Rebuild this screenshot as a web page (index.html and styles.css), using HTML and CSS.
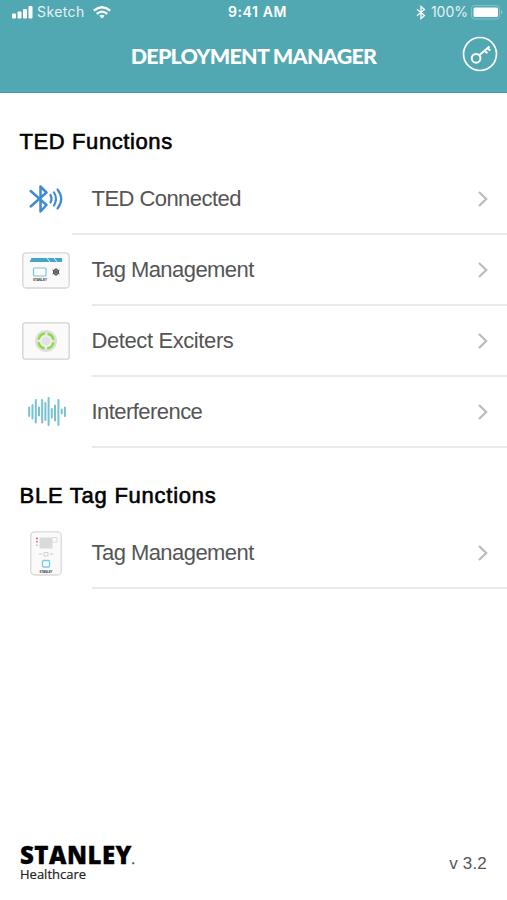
FILE: index.html
```html
<!DOCTYPE html>
<html lang="en">
<head>
<meta charset="utf-8">
<title>Deployment Manager</title>
<link rel="stylesheet" href="styles.css">
</head>
<body>
<div class="screen">
  <header class="header">
    <div class="status">
      <div class="carrier">
        <svg width="21" height="14" viewBox="0 0 21 14" fill="#fff"><rect x="0" y="8.500" width="4" height="5" rx="1"/><rect x="5.500" y="6.500" width="4" height="7" rx="1"/><rect x="11" y="4" width="4" height="9.500" rx="1"/><rect x="16.500" y="1" width="4" height="12.500" rx="1"/></svg>
        <span class="network">Sketch</span>
        <svg width="18" height="13" viewBox="0 0 18 13" fill="none" stroke="#fff" stroke-width="2.300"><path d="M.8 4.600Q9-2.200 17.200 4.600M3.700 7.800Q9 3.400 14.300 7.800"/><path d="M6.300 9.800Q9 7.700 11.700 9.800L9 12.500Z" fill="#fff" stroke="none"/></svg>
      </div>
      <span class="clock">9:41 AM</span>
      <div class="power">
        <svg width="10" height="15" viewBox="0 0 10 15" fill="none" stroke="#fff" stroke-width="1.300"><path d="M1 4.200L8.500 10.600L5 13.600V1.400L8.500 4.400L1 10.800"/></svg>
        <span class="percent">100%</span>
        <svg width="32" height="15" viewBox="0 0 32 15"><rect x=".5" y=".5" width="28" height="13.500" rx="3" fill="none" stroke="#83c1c8"/><rect x="2.500" y="2.500" width="24.500" height="9.500" rx="1.500" fill="#fff"/><path d="M30 5Q32.500 7.200 30 9.500Z" fill="#9bced3"/></svg>
      </div>
    </div>
    <div class="titlebar">
      <h1>DEPLOYMENT MANAGER</h1>
      <svg class="key" width="36" height="36" viewBox="0 0 36 36" fill="none" stroke="#fff" stroke-width="1.700"><circle cx="18" cy="18" r="16.500"/><circle cx="14.100" cy="22.300" r="4.400" stroke-width="2"/><path d="M17.200 19.200L27.500 10.500M22.500 14.500L25.300 17.300M25.400 12L28.200 14.600" stroke-width="2"/></svg>
    </div>
  </header>

  <main>
    <section>
      <h2>TED Functions</h2>
      <ul>
        <li class="row wide">
          <div class="icon"><svg width="48" height="36" viewBox="0 0 48 36" fill="none" stroke="#408bd5" stroke-width="2.500" stroke-linecap="round" stroke-linejoin="round"><path d="M8.700 10L24.500 24L18.500 30.500V5.500L24.500 11.500L8.700 25.500"/><path d="M28.500 14Q30.500 17.700 28.500 21.500M32 11.500Q36 17.700 32 24.500M35.500 8.500Q43 18 35.500 27.500" stroke-width="2.200"/></svg></div>
          <span class="label">TED Connected</span>
          <svg class="chevron" width="12" height="18" viewBox="0 0 12 18"><path d="M2 2L9.200 9L2 16"/></svg>
        </li>
        <li class="row">
          <div class="icon"><svg width="48" height="37" viewBox="0 0 48 37"><rect x=".8" y=".8" width="46.400" height="35.200" rx="3.500" fill="#fafafa" stroke="#d5d5d5" stroke-width="1.300"/><path d="M9.500 6H40V10H7.500Z" fill="#42a7c5"/><path d="M25 6L28 10M32 6L35 10" stroke="#d9f0f5" stroke-width="1"/><rect x="11.500" y="16" width="12.500" height="8" rx="1" fill="#fff" stroke="#70c7df" stroke-width="1.200"/><g stroke="#555"><circle cx="34" cy="20" r="2.400" fill="none" stroke-width="1.300"/><path d="M34 16V24M30.500 18L37.500 22M30.500 22L37.500 18" stroke-width="1"/></g><text x="11" y="29" class="brand" textLength="14" lengthAdjust="spacingAndGlyphs">STANLEY</text></svg></div>
          <span class="label">Tag Management</span>
          <svg class="chevron" width="12" height="18" viewBox="0 0 12 18"><path d="M2 2L9.200 9L2 16"/></svg>
        </li>
        <li class="row">
          <div class="icon"><svg width="48" height="38" viewBox="0 0 48 38"><rect x=".8" y=".8" width="46.400" height="36.400" rx="2.500" fill="#fafafa" stroke="#d2d2d2" stroke-width="1.300"/><circle cx="24" cy="19" r="11" fill="#dedede"/><circle cx="24" cy="19" r="7.500" fill="#eceeec" stroke="#8edb3e" stroke-width="2.500" stroke-dasharray="9 2.780" stroke-dashoffset="-1.400"/><circle cx="24" cy="19" r="4" fill="#e1e3e3"/></svg></div>
          <span class="label detect">Detect Exciters</span>
          <svg class="chevron" width="12" height="18" viewBox="0 0 12 18"><path d="M2 2L9.200 9L2 16"/></svg>
        </li>
        <li class="row">
          <div class="icon"><svg width="48" height="36" viewBox="0 0 48 36" fill="none" stroke="#78c1d5" stroke-width="2" stroke-linecap="round"><path d="M7.200 13.500V22M10.500 11V24.500M13.800 6V28.500M17 13.500V21.500M20.200 6V28.500M23.400 9V26M26.600 4V31M29.800 15V23.500M33 11.500V26.500M36.400 6V31M39.700 15.500V19.500M42.900 13.500V22"/></svg></div>
          <span class="label">Interference</span>
          <svg class="chevron" width="12" height="18" viewBox="0 0 12 18"><path d="M2 2L9.200 9L2 16"/></svg>
        </li>
      </ul>
    </section>
    <section>
      <h2 class="ble">BLE Tag Functions</h2>
      <ul>
        <li class="row">
          <div class="icon"><svg width="32" height="45" viewBox="0 0 32 45"><rect x=".8" y=".8" width="30.400" height="43.200" rx="4" fill="#fafafa" stroke="#d9d9d9" stroke-width="1.300"/><rect x="9.500" y="6.500" width="13" height="11" fill="#dadada"/><path d="M22.500 6.500H27V11H22.500" fill="none" stroke="#ddd"/><path d="M7 6.500V8.500M7 10V11.500" stroke="#d5555e" stroke-width="1.500"/><path d="M7 13.500V15" stroke="#bbb" stroke-width="1.500"/><path d="M9 23H12M20 23H23" stroke="#ccc"/><path d="M14 21.500V25H18V21.500Z" fill="none" stroke="#d0d0d0"/><rect x="12.500" y="29.500" width="7" height="6.500" rx="1" fill="#f7fdff" stroke="#7bcce2" stroke-width="1.300"/><text x="9.500" y="41.500" class="brand" textLength="13" lengthAdjust="spacingAndGlyphs">STANLEY</text></svg></div>
          <span class="label">Tag Management</span>
          <svg class="chevron" width="12" height="18" viewBox="0 0 12 18"><path d="M2 2L9.200 9L2 16"/></svg>
        </li>
      </ul>
    </section>
  </main>

  <footer>
    <div class="logo">
      <div class="wordmark">STANLEY<span class="reg">.</span></div>
      <div class="division">Healthcare</div>
    </div>
    <span class="version">v 3.2</span>
  </footer>
</div>
</body>
</html>
```
FILE: styles.css
```css
* { box-sizing: border-box; }
body { margin: 0; background: #fff; font-family: "Liberation Sans", sans-serif; }
.screen { width: 507px; height: 900px; display: flex; flex-direction: column; overflow: hidden; }
svg { display: block; flex: none; }
.header { height: 93px; background: #52a8b2; border-bottom: 1px solid #459ba6; color: #fff; flex: none; }
.status { height: 24px; display: grid; grid-template-columns: 1fr auto 1fr; align-items: center; padding: 0 4px 0 12px; }
.carrier, .power { display: flex; align-items: center; }
.power { justify-content: flex-end; }
.network, .percent { font: 14px/20px Inter, sans-serif; opacity: .85; }
.network { margin: 0 8px 0 4px; letter-spacing: .4px; }
.percent { margin: 0 3px 0 5px; }
.clock { font: 600 14px/20px Inter, sans-serif; letter-spacing: .6px; }
.titlebar { height: 60px; display: grid; grid-template-columns: 1fr auto 1fr; align-items: center; padding: 0 9px; }
.titlebar h1 { grid-column: 2; margin: 3px 0 0; font: 900 21.500px/26px Lato, sans-serif; letter-spacing: -.75px; white-space: nowrap; }
.key { justify-self: end; }
h2 { margin: 0; height: 71px; padding: 35px 0 0 19.500px; font-size: 22px; line-height: 27px; font-weight: 400; letter-spacing: .6px; color: #000; -webkit-text-stroke: .6px #000; }
.ble { height: 70px; padding-top: 34px; letter-spacing: .75px; }
ul { list-style: none; margin: 0; padding: 0; }
.row { height: 71px; display: flex; align-items: center; padding: 0 18.500px 1px 22px; background: linear-gradient(#e9e9e9, #e9e9e9) 92px 100% / 415px 2px no-repeat; }
.row.wide { background-position: 72px 100%; background-size: 435px 2px; }
.icon { width: 69.500px; display: flex; flex: none; }
.icon svg[width="32"] { margin-left: 8px; }
.label { flex: 1; font-size: 22px; line-height: 28px; letter-spacing: -.55px; color: #555; }
.detect { letter-spacing: -.4px; }
.chevron { fill: none; stroke: #bbb; stroke-width: 2.200; }
.brand { font: bold 3.500px "Liberation Sans", sans-serif; fill: #333; }
footer { margin-top: auto; height: 60px; padding: 0 20px; display: flex; justify-content: space-between; }
.logo { padding-top: 5px; }
.wordmark { font: 800 24px/20px "Open Sans", sans-serif; letter-spacing: .5px; color: #000; white-space: nowrap; -webkit-text-stroke: .3px #000; }
.reg { font-size: 8px; line-height: 1; color: #777; }
.division { font: 13px/13px "Open Sans", sans-serif; color: #222; margin-top: 3px; -webkit-text-stroke: .2px #222; }
.version { font-size: 17px; line-height: 24px; margin-top: 12px; color: #555; letter-spacing: .2px; }
```
